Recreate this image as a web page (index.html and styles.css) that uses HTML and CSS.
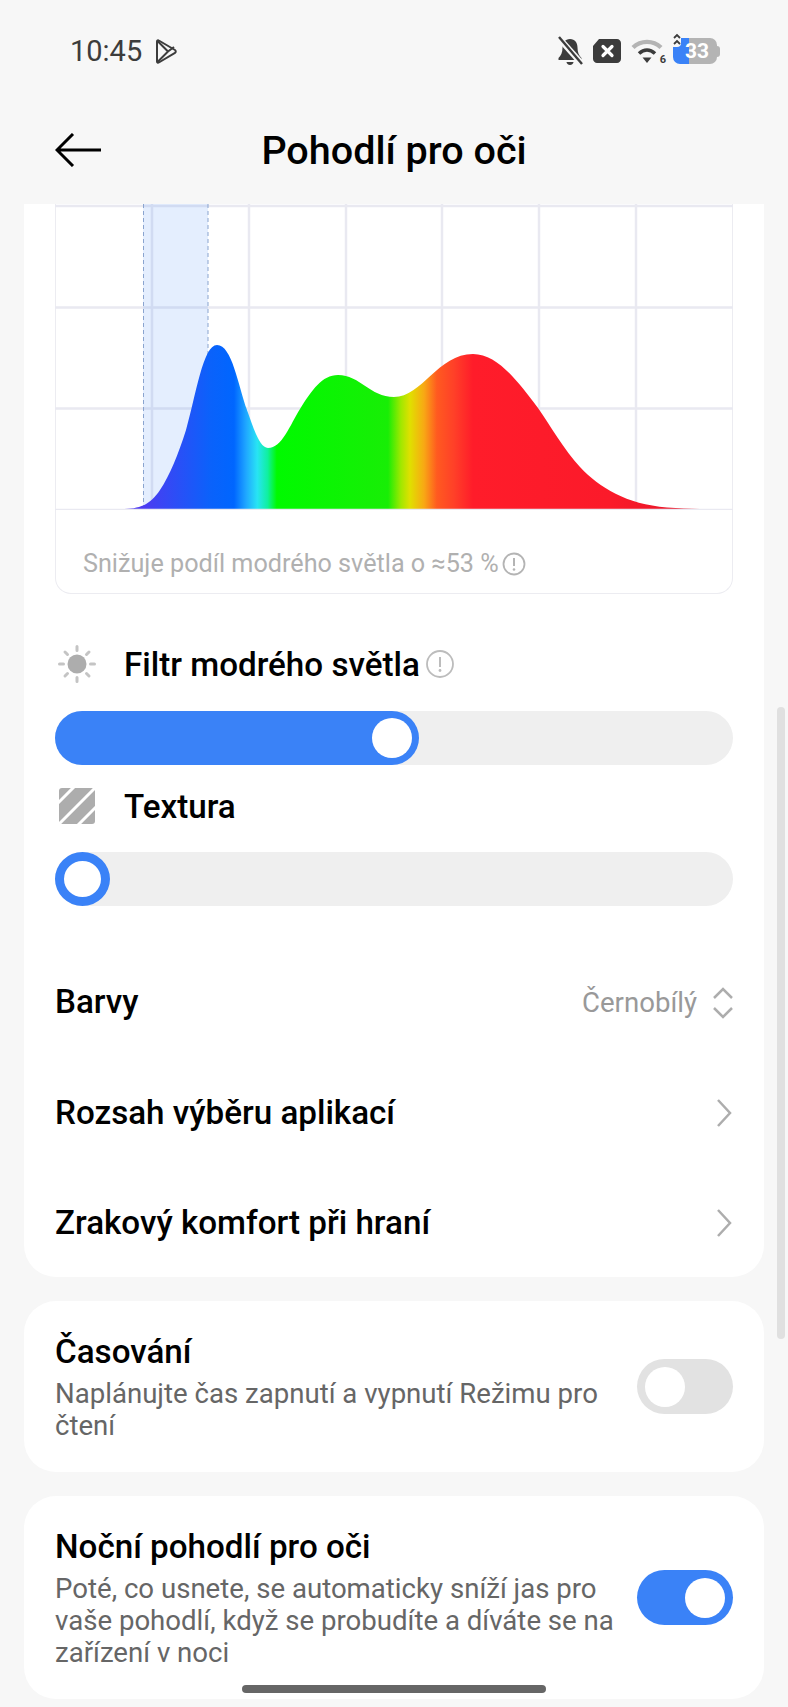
FILE: index.html
```html
<!DOCTYPE html>
<html>
<head>
<title>Pohodlí pro oči</title>
<link rel="stylesheet" href="styles.css">
</head>
<body>
<div class="status">
  <div class="status-left">
    <span class="time">10:45</span>
    <svg class="play" width="22" height="25" viewBox="0 0 22 25" fill="none" stroke="#3c3c3c" stroke-width="2" stroke-linejoin="round"><path d="M2 2.500c0-1 1-1.500 1.800-1L20 11c1 .6 1 2.200 0 2.800L3.800 23.500c-.8.500-1.800 0-1.800-1z"/><path d="M2.500 2l10.500 10.500L2.500 23M13 12.500l6-4.500"/></svg>
  </div>
  <div class="status-right">
    <svg width="26" height="30" viewBox="0 0 26 30"><path d="M13 3c-5 0-7.500 4-7.500 8.500 0 5-1.500 8-4 10.500v2h23v-2c-2.500-2.500-4-5.500-4-10.500C20.500 7 18 3 13 3z" fill="#3c3c3c"/><path d="M9.500 26h7c0 1.500-1.500 3-3.500 3s-3.500-1.500-3.500-3z" fill="#3c3c3c"/><path d="M1 1l24 27" stroke="#f7f7f7" stroke-width="6"/><path d="M2 1l23 27" stroke="#3c3c3c" stroke-width="2.400"/></svg>
    <svg width="30" height="26" viewBox="0 0 30 26"><path d="M7 1h18c2 0 4 2 4 4v16c0 2-2 4-4 4H5c-2 0-4-2-4-4V8z" fill="#3c3c3c"/><path d="M11 8.500l9 9M20 8.500l-9 9" stroke="#fff" stroke-width="3.200" stroke-linecap="round"/></svg>
    <span class="wifi">
      <svg width="33" height="26" viewBox="0 0 33 26" fill="none"><path d="M2 9.500c8-7.500 20-7.500 28 0" stroke="#b4b4b4" stroke-width="4.400"/><path d="M8 15.500c5-4.500 11-4.500 16 0" stroke="#3c3c3c" stroke-width="3.600"/><path d="M11.500 19.500h9L16 25z" fill="#3c3c3c"/></svg>
      <span class="wifi-num">6</span>
    </span>
    <span class="battery">
      <span class="battery-arrows">
        <svg width="8" height="14" viewBox="0 0 8 14" fill="none" stroke="#3c3c3c" stroke-width="1.800"><path d="M1 5l3-3 3 3M1 11l3-3 3 3"/></svg>
      </span>
      <span class="battery-body"><span class="battery-num">33</span></span>
      <span class="battery-tip"></span>
    </span>
  </div>
</div>

<div class="nav">
  <svg class="back" width="46" height="34" viewBox="0 0 46 34" fill="none" stroke="#000" stroke-width="3"><path d="M18 1L2 17l16 16M2 17h44"/></svg>
  <h1 class="nav-title">Pohodlí pro oči</h1>
</div>

<div class="card card-main">
  <div class="chart-box">
    <svg class="chart" width="678" height="306" viewBox="55 204 678 306">
      <defs>
        <linearGradient id="spectrum" gradientUnits="userSpaceOnUse" x1="121" y1="0" x2="732" y2="0">
          <stop offset="0" stop-color="#5a3ae8"/>
          <stop offset="0.04" stop-color="#4a3cf2"/>
          <stop offset="0.147" stop-color="#0a62fb"/>
          <stop offset="0.185" stop-color="#0066ff"/>
          <stop offset="0.205" stop-color="#20a8ff"/>
          <stop offset="0.223" stop-color="#28e4f4"/>
          <stop offset="0.24" stop-color="#10f0a0"/>
          <stop offset="0.255" stop-color="#00fa00"/>
          <stop offset="0.437" stop-color="#18ee06"/>
          <stop offset="0.458" stop-color="#a0e800"/>
          <stop offset="0.473" stop-color="#e0e000"/>
          <stop offset="0.496" stop-color="#f8a814"/>
          <stop offset="0.517" stop-color="#ff5a20"/>
          <stop offset="0.545" stop-color="#ff4028"/>
          <stop offset="0.576" stop-color="#ff1c2a"/>
          <stop offset="0.8" stop-color="#fb1a2a"/>
          <stop offset="1" stop-color="#d8142a"/>
        </linearGradient>
      </defs>
      <g stroke="#e9e9f1" stroke-width="2.500">
        <path d="M55 206h678M55 307.500h678M55 408.500h678"/>
        <path d="M152 204v305M249 204v305M346 204v305M442 204v305M539 204v305M636 204v305"/>
      </g>
      <rect x="143" y="204" width="65" height="305" fill="#4d8cf5" fill-opacity="0.15"/>
      <path d="M143.500 204v305M208 204v305" stroke="#8aa4cf" stroke-width="1" stroke-dasharray="4 3"/>
      <path d="M121 509C140 509 150 505 160 490C170 475 178 455 186 430C196 395 203 345 217 345C232 345 238 385 247 410C254 430 260 448 268 448C282 448 290 425 300 409C312 390 322 375 338 375C360 375 370 397 394 397C422 397 438 354 473 354C498 354 518 382 538 408C550 425 564 450 580 467C600 488 626 504 667 507.500C690 509 710 509.500 732 509.500H121Z" fill="url(#spectrum)"/>
      <path d="M55 509.500h678" stroke="#e9e9f1" stroke-width="1.500"/>
    </svg>
    <div class="note">
      <span>Snižuje podíl modrého světla o ≈53 %</span>
      <svg class="info" width="24" height="24" viewBox="0 0 24 24"><circle cx="12" cy="12" r="10.500" fill="none" stroke="#b4b4b4" stroke-width="1.800"/><path d="M12 6v8" stroke="#b4b4b4" stroke-width="2"/><circle cx="12" cy="17.500" r="1.300" fill="#b4b4b4"/></svg>
    </div>
  </div>

  <div class="label-row label-first">
    <svg class="label-icon" width="38" height="38" viewBox="0 0 38 38"><circle cx="19" cy="19" r="9.500" fill="#adadad"/><path d="M19 1.500v4M19 32.500v4M1.500 19h4M32.500 19h4M7 7l2.500 2.500M28.500 28.500L31 31M7 31l2.500-2.500M28.500 9.500L31 7" stroke="#c4c4c4" stroke-width="3" stroke-linecap="round"/></svg>
    <span class="label-text">Filtr modrého světla</span>
    <svg class="info-big" width="28" height="28" viewBox="0 0 28 28"><circle cx="14" cy="14" r="13" fill="none" stroke="#bcbcbc" stroke-width="1.800"/><path d="M14 7v10" stroke="#bcbcbc" stroke-width="2"/><circle cx="14" cy="20.500" r="1.400" fill="#bcbcbc"/></svg>
  </div>
  <div class="slider slider-first">
    <div class="slider-fill" style="width: 364px"><span class="slider-knob"></span></div>
  </div>

  <div class="label-row label-second">
    <svg class="label-icon" width="38" height="38" viewBox="0 0 38 38"><rect x="1" y="1" width="36" height="36" rx="3" fill="#adadad"/><path d="M16 0L0 16M38 0L0 38M38 20L20 38" stroke="#fff" stroke-width="3"/></svg>
    <span class="label-text">Textura</span>
  </div>
  <div class="slider slider-second">
    <span class="slider-ring"></span>
  </div>

  <div class="rows">
    <div class="row">
      <span class="row-title">Barvy</span>
      <span class="row-value">Černobílý</span>
      <svg class="updown" width="20" height="32" viewBox="0 0 20 32" fill="none" stroke="#adadad" stroke-width="2.500"><path d="M1 11L10 2l9 9M1 21l9 9 9-9"/></svg>
    </div>
    <div class="row">
      <span class="row-title">Rozsah výběru aplikací</span>
      <svg class="chevron" width="16" height="28" viewBox="0 0 16 28" fill="none" stroke="#adadad" stroke-width="2.500"><path d="M2 1l12 13L2 27"/></svg>
    </div>
    <div class="row">
      <span class="row-title">Zrakový komfort při hraní</span>
      <svg class="chevron" width="16" height="28" viewBox="0 0 16 28" fill="none" stroke="#adadad" stroke-width="2.500"><path d="M2 1l12 13L2 27"/></svg>
    </div>
  </div>
</div>

<div class="card card-toggle">
  <div class="toggle-text">
    <div class="row-title">Časování</div>
    <div class="desc">Naplánujte čas zapnutí a vypnutí Režimu pro čtení</div>
  </div>
  <span class="toggle"><span class="toggle-knob"></span></span>
</div>

<div class="card card-toggle">
  <div class="toggle-text">
    <div class="row-title">Noční pohodlí pro oči</div>
    <div class="desc">Poté, co usnete, se automaticky sníží jas pro vaše pohodlí, když se probudíte a díváte se na zařízení v noci</div>
  </div>
  <span class="toggle toggle-on"><span class="toggle-knob"></span></span>
</div>

<div class="scrollbar"></div>
<div class="home-bar"></div>
</body>
</html>
```

FILE: styles.css
```css
* {
  box-sizing: border-box;
}

html, body {
  margin: 0;
  height: 1707px;
  overflow: hidden;
}

body {
  position: relative;
  font-family: Roboto, sans-serif;
  background-color: #f7f7f7;
  color: #000;
}

.status {
  height: 102px;
  padding: 0 68px 0 70px;
  display: flex;
  align-items: center;
  justify-content: space-between;
}

.status-left {
  display: flex;
  align-items: center;
  gap: 13px;
}

.time {
  font-size: 29px;
  color: #3c3c3c;
}

.status-right {
  display: flex;
  align-items: center;
  gap: 9px;
}

.wifi {
  position: relative;
  display: flex;
}

.wifi-num {
  position: absolute;
  right: -2px;
  bottom: -2px;
  font-size: 11px;
  font-weight: 700;
  color: #3c3c3c;
}

.battery {
  display: flex;
  align-items: center;
  position: relative;
}

.battery-arrows {
  position: absolute;
  left: 0;
  top: -5px;
  display: flex;
  background-color: #f7f7f7;
  border-radius: 0 0 4px 0;
}

.battery-body {
  width: 44px;
  height: 26px;
  border-radius: 7px;
  background: linear-gradient(to right, #3a82f7 16px, #b4b4b4 16px);
  display: flex;
  align-items: center;
  justify-content: center;
}

.battery-num {
  font-size: 21px;
  font-weight: 700;
  color: #fff;
  line-height: 26px;
  padding-left: 4px;
}

.battery-tip {
  width: 3px;
  height: 11px;
  border-radius: 0 3px 3px 0;
  background-color: #b4b4b4;
}

.nav {
  height: 102px;
  padding-left: 55px;
  padding-bottom: 6px;
  display: flex;
  align-items: center;
  position: relative;
}

.nav-title {
  position: absolute;
  left: 0;
  right: 0;
  margin: 0;
  text-align: center;
  font-size: 39.500px;
  font-weight: 480;
}

.card {
  margin: 0 24px;
  padding: 0 31px;
  background-color: #fff;
  border-radius: 32px;
}

.card-main {
  border-radius: 0 0 32px 32px;
  height: 1073px;
}

.chart-box {
  height: 390px;
  border: 1.500px solid #ececf1;
  border-top: 0;
  border-radius: 0 0 16px 16px;
}

.chart {
  display: block;
  margin-left: -1.500px;
}

.note {
  display: flex;
  align-items: center;
  gap: 3px;
  padding: 38px 0 0 27px;
  font-size: 25.200px;
  line-height: 32px;
  color: #b0b0b0;
}

.label-row {
  height: 40px;
  display: flex;
  align-items: center;
}

.label-first {
  margin-top: 50px;
}

.label-second {
  margin-top: 21px;
}

.label-icon {
  margin-left: 3px;
  margin-right: 28px;
  flex-shrink: 0;
}

.label-text {
  font-size: 33.200px;
  font-weight: 480;
}

.info-big {
  margin-left: 6px;
}

.slider {
  height: 54px;
  border-radius: 27px;
  background-color: #efefef;
}

.slider-first {
  margin-top: 27px;
}

.slider-second {
  margin-top: 26px;
}

.slider-fill {
  height: 54px;
  padding-right: 7px;
  border-radius: 27px;
  background-color: #3a82f7;
  display: flex;
  align-items: center;
  justify-content: flex-end;
}

.slider-knob {
  width: 40px;
  height: 40px;
  border-radius: 50%;
  background-color: #fff;
}

.slider-ring {
  display: block;
  width: 55px;
  height: 54px;
  border: 9px solid #3a82f7;
  border-radius: 50%;
  background-color: #fff;
}

.rows {
  margin-top: 41px;
}

.row {
  height: 110.500px;
  display: flex;
  align-items: center;
}

.row-title {
  font-size: 33.200px;
  font-weight: 480;
  line-height: 42px;
}

.row .row-title {
  flex: 1;
}

.row-value {
  font-size: 27.600px;
  color: #999;
  margin-right: 16px;
}

.updown {
  margin-top: 2px;
}

.chevron {
  margin-right: 1px;
}

.card-toggle {
  margin-top: 24px;
  padding-top: 30px;
  padding-bottom: 30px;
  display: flex;
  align-items: center;
  gap: 22px;
}

.toggle-text {
  flex: 1;
}

.desc {
  margin-top: 5px;
  font-size: 27.600px;
  line-height: 32px;
  color: #666;
}

.toggle {
  width: 96px;
  height: 55px;
  padding: 0 8px;
  border-radius: 28px;
  background-color: #e2e2e2;
  display: flex;
  align-items: center;
  flex-shrink: 0;
}

.toggle-on {
  background-color: #3a82f7;
  justify-content: flex-end;
}

.toggle-knob {
  width: 40px;
  height: 40px;
  border-radius: 50%;
  background-color: #fff;
}

.scrollbar {
  position: absolute;
  left: 777px;
  top: 707px;
  width: 8px;
  height: 632px;
  border-radius: 4px;
  background-color: #e0e0e0;
}

.home-bar {
  position: absolute;
  left: 242px;
  top: 1685px;
  width: 304px;
  height: 8px;
  border-radius: 4px;
  background-color: #666;
}
```
